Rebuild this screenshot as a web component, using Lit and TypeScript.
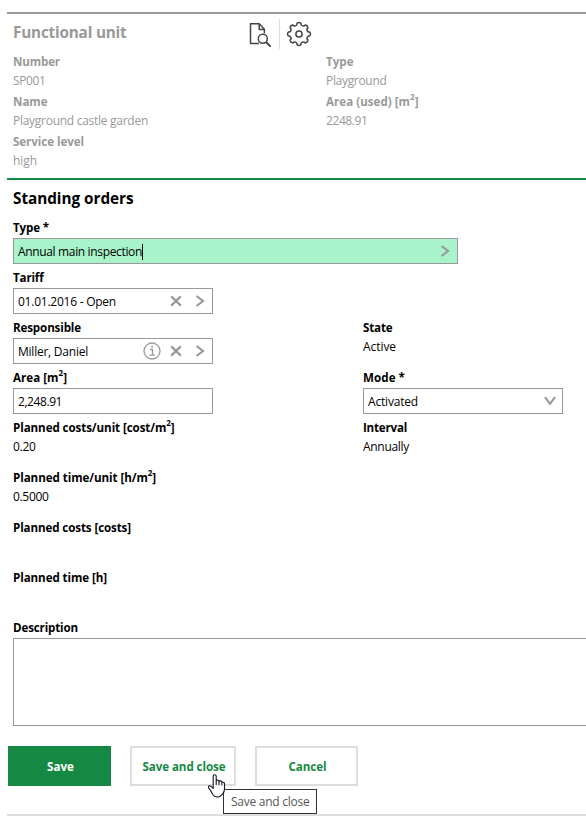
import { LitElement, html, css, svg, nothing, TemplateResult } from "lit";
import { customElement, property } from "lit/decorators.js";

/** One line of text, tracked so that it fills a set measure. */
@customElement("fit-text")
class FitText extends LitElement {
  @property() text = "";
  @property({ type: Number }) measure = 0;

  static styles = css`
    :host { display: inline-block; white-space: pre; }
    .line { display: inline-block; }
    .sup { font-size: 8px; line-height: 0; vertical-align: 6px; }
  `;

  firstUpdated() {
    const line = this.renderRoot.querySelector<HTMLElement>(".line")!;
    const natural = line.getBoundingClientRect().width;
    line.style.letterSpacing = `${(this.measure - natural) / this.text.length}px`;
  }

  render() {
    const [head, tail] = this.text.split("^2");
    return html`<span class="line">${head}${tail === undefined ? nothing : html`<span class="sup">2</span>${tail}`}</span>`;
  }
}

const t = (text: string, measure: number) =>
  html`<fit-text .text=${text} .measure=${measure}></fit-text>`;

const gearPath = () => {
  const r = 10.8;
  const at = (deg: number) => {
    const a = (deg * Math.PI) / 180;
    return `${(13 + r * Math.sin(a)).toFixed(2)} ${(13 - r * Math.cos(a)).toFixed(2)}`;
  };
  let d = `M${at(-11)}`;
  for (let i = 0; i < 8; i++) {
    d += `A3.2 3.2 0 0 1 ${at(i * 45 + 11)}A2.2 2.2 0 0 0 ${at(i * 45 + 34)}`;
  }
  return d + "Z";
};

const docIcon = html`<svg class="icon" width="24" height="26" viewBox="0 0 24 26">${svg`
  <path d="M11 21.5H2.5V1.7H11.2L16.4 7.2V11.5M11.2 1.7V7.4H16.4" />
  <circle cx="14.8" cy="16.8" r="4.5" />
  <path d="M18 20L22.6 24.6" stroke-width="2" />`}</svg>`;
const gearIcon = html`<svg class="icon gear" width="26" height="26" viewBox="0 0 26 26">${svg`
  <path d=${gearPath()} /><circle cx="13" cy="13" r="3.1" />`}</svg>`;
const info = html`<svg class="info" width="18" height="18" viewBox="0 0 18 18">${svg`
  <circle cx="9" cy="9" r="8" /><path d="M7 7.5H9.5V13M6.5 13.2H12" /><path d="M8.3 4.6H10" stroke-width="1.8" />`}</svg>`;
const clear = html`<svg class="sign" width="12" height="12" viewBox="0 0 12 12"><path d="M1.2 1.4L10.8 10.6M10.8 1.4L1.2 10.6" /></svg>`;
const next = html`<svg class="sign" width="10" height="12" viewBox="0 0 10 12"><path d="M1.5 1L8 6L1.5 11" /></svg>`;
const down = html`<svg class="sign" width="12" height="10" viewBox="0 0 12 10"><path d="M1 1.2L6 7.8L11 1.2" /></svg>`;

@customElement("app-root")
class AppRoot extends LitElement {
  static styles = css`
    :host {
      display: block; box-sizing: border-box; width: 586px; height: 829px; overflow: hidden;
      position: relative; background: #fff; padding: 12px 0 0 7px; color: #000;
      font: 12px/20px "Open Sans", "Noto Sans", sans-serif;
    }
    * { box-sizing: border-box; }
    svg { display: block; fill: none; flex: none; }
    .unit { height: 168px; border-top: 2px solid #999; border-bottom: 2px solid #158943; color: #999; padding-left: 6px; }
    .bar { display: flex; height: 38px; padding-top: 5px; }
    .heading { width: 235px; font-size: 15.3px; line-height: 27px; font-weight: 700; }
    .icon { stroke: #444; stroke-width: 1.5; stroke-linejoin: round; margin-top: 3px; }
    .gear { margin-top: 2px; }
    .divide { width: 1px; height: 30px; background: #ddd; margin: 0 6px 0 7px; }
    .facts { display: grid; grid-template-columns: 313px 1fr; grid-auto-rows: 40px; }
    .label { height: 20px; font-size: 11.6px; font-weight: 700; }
    .value { line-height: 18px; }
    .title { padding: 5px 0 0 6px; height: 38px; font-size: 15.3px; line-height: 27px; font-weight: 700; }
    .form { display: grid; grid-template-columns: 350px 1fr; grid-auto-rows: 50px; padding-left: 6px; }
    .box { display: flex; align-items: center; width: 200px; height: 26px; border: 1px solid #999; padding-left: 4px; }
    .wide { width: 445px; background: #a8f3c9; }
    .text { flex: 1; display: flex; align-items: center; line-height: 26px; height: 26px; padding-top: 1px; }
    .caret { width: 1px; height: 16px; background: #000; }
    .sign { stroke: #999; stroke-width: 2.2; }
    .info { stroke: #999; stroke-width: 1.3; }
    .ends { display: flex; align-items: center; gap: 13px; padding-right: 7px; }
    .drop { padding-right: 6px; }
    .info + .sign { margin-left: -4px; }
    .area { height: 88px; border: 1px solid #999; border-right: 0; margin-left: 6px; }
    .described { height: 20px; padding-left: 6px; font-size: 11.6px; font-weight: 700; }
    .actions { display: flex; gap: 19px; padding: 20px 0 0 1px; height: 90px; border-bottom: 2px solid #ddd; }
    .btn { height: 40px; width: 103px; border: 2px solid #ddd; color: #158943; font-size: 11.6px; font-weight: 700; display: flex; align-items: center; justify-content: center; padding: 1px 0 0 2px; }
    .primary { background: #158943; border-color: #158943; color: #fff; }
    .mid { width: 106px; }
    .tip { position: absolute; left: 223px; top: 789px; width: 94px; height: 25px; border: 1px solid #333; background: #fff; color: #575757; padding-left: 7px; line-height: 23px; }
    .hand { position: absolute; left: 207px; top: 773px; fill: #fff; stroke: #111122; stroke-width: 1.1; stroke-linejoin: round; }
  `;

  fact(label: string, lw: number, value: string, vw: number) {
    return html`<div class="fact"><div class="label">${t(label, lw)}</div><div class="value">${t(value, vw)}</div></div>`;
  }

  field(label: string, lw: number, body: unknown = nothing) {
    return html`<div><div class="label">${t(label, lw)}</div>${body}</div>`;
  }

  value(text: string, w: number) {
    return html`<div class="value">${t(text, w)}</div>`;
  }

  box(text: string, w: number, ends: TemplateResult | typeof nothing, wide = false) {
    return html`<div class="box ${wide ? "wide" : ""}">
      <div class="text">${t(text, w)}${wide ? html`<span class="caret"></span>` : nothing}</div>
      <div class="ends ${ends === down ? "drop" : ""}">${ends}</div>
    </div>`;
  }

  render() {
    return html`
      <section class="unit">
        <div class="bar">
          <div class="heading">${t("Functional unit", 113.5)}</div>
          ${docIcon}<span class="divide"></span>${gearIcon}
        </div>
        <div class="facts">
          ${this.fact("Number", 47, "SP001", 32.5)}
          ${this.fact("Type", 27.5, "Playground", 60.5)}
          ${this.fact("Name", 34.5, "Playground castle garden", 135)}
          ${this.fact("Area (used) [m^2]", 92.5, "2248.91", 41.5)}
          ${this.fact("Service level", 71, "high", 24)}
        </div>
      </section>
      <div class="title">${t("Standing orders", 120.5)}</div>
      <section class="form">
        ${this.field("Type *", 36, this.box("Annual main inspection", 124, next, true))}<i></i>
        ${this.field("Tariff", 30.5, this.box("01.01.2016 - Open", 98, html`${clear}${next}`))}<i></i>
        ${this.field("Responsible", 68, this.box("Miller, Daniel", 70, html`${info}${clear}${next}`))}
        ${this.field("State", 29.5, this.value("Active", 33))}
        ${this.field("Area [m^2]", 54, this.box("2,248.91", 44, nothing))}
        ${this.field("Mode *", 42, this.box("Activated", 50, down))}
        ${this.field("Planned costs/unit [cost/m^2]", 161.5, this.value("0.20", 22.5))}
        ${this.field("Interval", 44, this.value("Annually", 46))}
        ${this.field("Planned time/unit [h/m^2]", 143, this.value("0.5000", 35.5))}<i></i>
        ${this.field("Planned costs [costs]", 118)}<i></i>
        ${this.field("Planned time [h]", 94)}<i></i>
      </section>
      <div class="described">${t("Description", 65)}</div>
      <div class="area"></div>
      <div class="actions">
        <div class="btn primary">${t("Save", 27)}</div>
        <div class="btn mid">${t("Save and close", 83)}</div>
        <div class="btn">${t("Cancel", 38)}</div>
      </div>
      <div class="tip">${t("Save and close", 78.5)}</div>
      <svg class="hand" width="20" height="26" viewBox="0 0 20 26">
        <path d="M6.2 15.5V3.2Q6.2 1.7 7.7 1.7Q9.2 1.7 9.2 3.2V7.8Q9.7 6.9 10.8 7.1Q11.9 7.3 12 8.6Q12.6 7.6 13.7 7.9Q14.9 8.2 14.9 9.4Q15.6 8.8 16.5 9.2Q17.5 9.6 17.5 10.8V15.5Q17.5 18.6 15.9 20.6Q14 24 10.5 24Q7.6 24 5.6 21.2L3.6 17.5L1.6 14.8Q1.1 13.4 2.3 12.8Q3.7 12.4 6.2 15.5ZM9.2 7.8V12M12 8.6V12.3M14.9 9.4V12.5" />
      </svg>`;
  }
}
